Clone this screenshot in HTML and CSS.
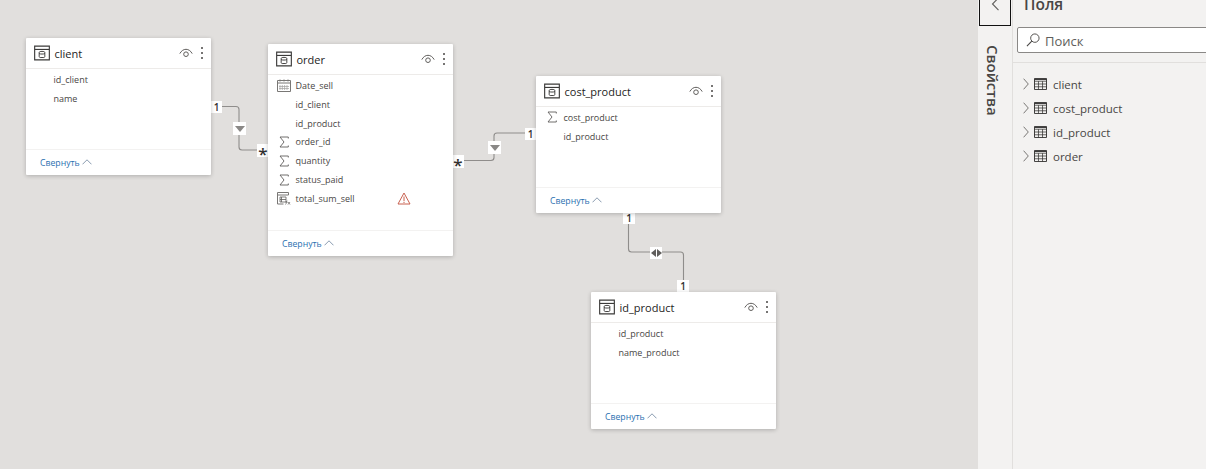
FILE: index.html
```html
<!DOCTYPE html>
<html lang="ru">
<head>
<meta charset="utf-8">
<title>Модель</title>
<link rel="stylesheet" href="styles.css">
</head>
<body>
<svg width="0" height="0" class="defs">
  <defs>
    <symbol id="i-table" viewBox="0 0 17 16">
      <path d="M.7.7h15.6v14.6H.7z" fill="none" stroke="#3b3a39" stroke-width="1.2"/>
      <path d="M1 4.2h15" stroke="#3b3a39" stroke-width="1.2"/>
      <path d="M5.5 7.4c0-.8 1.2-1.1 3-1.1s3 .3 3 1.1v4.400c0 .6-.6 1-1.100 1H6.600c-.5 0-1.100-.4-1.100-1zM5.500 8.600c1 .7 5 .7 6 0" fill="none" stroke="#3b3a39"/>
    </symbol>
    <symbol id="i-eye" viewBox="0 0 14 10">
      <path d="M.8 5.600C2.400 2.700 4.600 1.300 7 1.300s4.600 1.400 6.200 4.300" fill="none" stroke="#605e5c"/>
      <circle cx="7" cy="6.200" r="2.300" fill="none" stroke="#605e5c"/>
    </symbol>
    <symbol id="i-dots" viewBox="0 0 4 14">
      <circle cx="2" cy="2" r="1" fill="#484644"/><circle cx="2" cy="7" r="1" fill="#484644"/><circle cx="2" cy="12" r="1" fill="#484644"/>
    </symbol>
    <symbol id="i-sum" viewBox="0 0 10 12">
      <path d="M9.300 2.500V1H1l4 5-4 5h8.300V9.500" fill="none" stroke="#605e5c" stroke-width=".9"/>
    </symbol>
    <symbol id="i-cal" viewBox="0 0 14 13">
      <path d="M.5 1.500h13v11H.5z" fill="#fff" stroke="#797775"/>
      <path d="M.5 4h13M3 .5v2M7 .5v2M11 .5v2" stroke="#797775"/>
      <path d="M3 6v5M5.300 6v5M7.600 6v5M10 6v5M2 7.500h10M2 9.500h10" stroke="#a19f9d" stroke-width=".7"/>
    </symbol>
    <symbol id="i-calc" viewBox="0 0 14 13">
      <path d="M.5.500h11v2.500H.5zM.5 3v9h6" fill="none" stroke="#797775"/>
      <path d="M3 5h6v5H3zM4.500 5v5M3 7.500h6" fill="none" stroke="#605e5c" stroke-width=".8"/>
      <path d="M8.500 12.500c1 0 .6-4 1.800-4M8.700 10.200h2M11 10l2 2.500M13 10l-2 2.500" fill="none" stroke="#605e5c" stroke-width=".7"/>
    </symbol>
    <symbol id="i-up" viewBox="0 0 10 6">
      <path d="M.5 5.300 5 .8l4.500 4.500" fill="none" stroke="#8a9bb0"/>
    </symbol>
    <symbol id="i-grid" viewBox="0 0 14 13">
      <path d="M.5.500h13v12H.5z" fill="none" stroke="#323130"/>
      <path d="M.5 3.500h13M.5 6.500h13M.5 9.500h13M4.800 3.500v9M9.200 3.500v9" stroke="#323130" stroke-width=".8"/>
      <path d="M.5 1.500h13" stroke="#323130" stroke-width="1.200"/>
    </symbol>
    <symbol id="i-right" viewBox="0 0 6 12">
      <path d="M.6.700 5.300 6 .6 11.300" fill="none" stroke="#797775"/>
    </symbol>
  </defs>
</svg>

<main class="app">
  <section class="canvas">
    <svg class="wires" width="978" height="469" viewBox="0 0 978 469">
      <path d="M222 106.500h14q3 0 3 3V147q0 3 3 3h16"/>
      <path d="M463 160.500h28q3 0 3-3V136q0-3 3-3h29"/>
      <path d="M628.500 224v25q0 3 3 3h49q3 0 3 3v26"/>
    </svg>

    <span class="tag tag-a">1</span>
    <span class="tag tag-star tag-b">*</span>
    <span class="tag tag-star tag-c">*</span>
    <span class="tag tag-d">1</span>
    <span class="tag tag-e">1</span>
    <span class="tag tag-f">1</span>

    <span class="dir dir-a"><i class="tri"></i></span>
    <span class="dir dir-b"><i class="tri"></i></span>
    <span class="dir dir-c"><i class="tri-l"></i><i class="tri-r"></i></span>

    <article class="card card-client">
      <header class="card-head">
        <svg class="ic-table"><use href="#i-table"/></svg>
        <h2 class="card-title">client</h2>
        <svg class="ic-eye"><use href="#i-eye"/></svg>
        <svg class="ic-dots"><use href="#i-dots"/></svg>
      </header>
      <ul class="fields">
        <li class="field"><span class="field-ic"></span>id_client</li>
        <li class="field"><span class="field-ic"></span>name</li>
      </ul>
      <footer class="card-foot"><span class="collapse">Свернуть</span><svg class="ic-up"><use href="#i-up"/></svg></footer>
    </article>

    <article class="card card-order">
      <header class="card-head">
        <svg class="ic-table"><use href="#i-table"/></svg>
        <h2 class="card-title">order</h2>
        <svg class="ic-eye"><use href="#i-eye"/></svg>
        <svg class="ic-dots"><use href="#i-dots"/></svg>
      </header>
      <ul class="fields">
        <li class="field"><span class="field-ic"><svg class="ic-cal"><use href="#i-cal"/></svg></span>Date_sell</li>
        <li class="field"><span class="field-ic"></span>id_client</li>
        <li class="field"><span class="field-ic"></span>id_product</li>
        <li class="field"><span class="field-ic"><svg class="ic-sum"><use href="#i-sum"/></svg></span>order_id</li>
        <li class="field"><span class="field-ic"><svg class="ic-sum"><use href="#i-sum"/></svg></span>quantity</li>
        <li class="field"><span class="field-ic"><svg class="ic-sum"><use href="#i-sum"/></svg></span>status_paid</li>
        <li class="field"><span class="field-ic"><svg class="ic-cal"><use href="#i-calc"/></svg></span>total_sum_sell
          <svg class="ic-warn" viewBox="0 0 14 13"><path d="M7 1 13 12H1z" fill="none" stroke="#c8604f"/><path d="M7 4.500v4.500M7 9.800v1.200" stroke="#c8604f"/></svg>
        </li>
      </ul>
      <footer class="card-foot"><span class="collapse">Свернуть</span><svg class="ic-up"><use href="#i-up"/></svg></footer>
    </article>

    <article class="card card-cost">
      <header class="card-head">
        <svg class="ic-table"><use href="#i-table"/></svg>
        <h2 class="card-title">cost_product</h2>
        <svg class="ic-eye"><use href="#i-eye"/></svg>
        <svg class="ic-dots"><use href="#i-dots"/></svg>
      </header>
      <ul class="fields">
        <li class="field"><span class="field-ic"><svg class="ic-sum"><use href="#i-sum"/></svg></span>cost_product</li>
        <li class="field"><span class="field-ic"></span>id_product</li>
      </ul>
      <footer class="card-foot"><span class="collapse">Свернуть</span><svg class="ic-up"><use href="#i-up"/></svg></footer>
    </article>

    <article class="card card-id">
      <header class="card-head">
        <svg class="ic-table"><use href="#i-table"/></svg>
        <h2 class="card-title">id_product</h2>
        <svg class="ic-eye"><use href="#i-eye"/></svg>
        <svg class="ic-dots"><use href="#i-dots"/></svg>
      </header>
      <ul class="fields">
        <li class="field"><span class="field-ic"></span>id_product</li>
        <li class="field"><span class="field-ic"></span>name_product</li>
      </ul>
      <footer class="card-foot"><span class="collapse">Свернуть</span><svg class="ic-up"><use href="#i-up"/></svg></footer>
    </article>
  </section>

  <aside class="strip">
    <button class="back" type="button" aria-label="Назад">
      <svg class="ic-back" width="9" height="14" viewBox="0 0 9 14"><path d="M7.500.800 1.500 7l6 6.200" fill="none" stroke="#605e5c" stroke-width="1.100"/></svg>
    </button>
    <span class="strip-label">Свойства</span>
  </aside>

  <aside class="panel">
    <h1 class="panel-title">Поля</h1>
    <div class="search-wrap">
      <div class="search">
        <svg class="ic-search" viewBox="0 0 15 15"><circle cx="9.500" cy="5.500" r="4.500" fill="none" stroke="#484644"/><path d="M6.200 8.800 1 14" stroke="#484644" stroke-width="1.200"/></svg>
        <span class="search-text">Поиск</span>
      </div>
    </div>
    <ul class="tree">
      <li class="tree-row"><svg class="ic-right"><use href="#i-right"/></svg><svg class="ic-grid"><use href="#i-grid"/></svg>client</li>
      <li class="tree-row"><svg class="ic-right"><use href="#i-right"/></svg><svg class="ic-grid"><use href="#i-grid"/></svg>cost_product</li>
      <li class="tree-row"><svg class="ic-right"><use href="#i-right"/></svg><svg class="ic-grid"><use href="#i-grid"/></svg>id_product</li>
      <li class="tree-row"><svg class="ic-right"><use href="#i-right"/></svg><svg class="ic-grid"><use href="#i-grid"/></svg>order</li>
    </ul>
  </aside>
</main>
</body>
</html>
```

FILE: styles.css
```css
* { box-sizing: border-box; }
html, body { margin: 0; padding: 0; height: 100%; overflow: hidden; }
body { font-family: "Open Sans", "Noto Sans", sans-serif; color: #323130; background: #f3f2f1; }
.defs { position: absolute; }
ul { list-style: none; margin: 0; padding: 0; }

.app { display: flex; width: 1206px; height: 469px; }

.canvas { position: relative; flex: 0 0 978px; height: 469px; background: #e1dfdd; overflow: hidden; }
.wires { position: absolute; left: 0; top: 0; }
.wires path { fill: none; stroke: #8f8d8b; stroke-width: 1.100; }

.tag {
  position: absolute; width: 11px; height: 12px; background: #fff;
  font: 600 10px/12px "Open Sans", sans-serif; text-align: center; color: #323130;
}
.tag-star { font-size: 17px; line-height: 19px; font-weight: 600; height: 13px; width: 12px; }
.tag-a { left: 211px; top: 101px; }
.tag-b { left: 257px; top: 144px; }
.tag-c { left: 452px; top: 155px; }
.tag-d { left: 525px; top: 128px; }
.tag-e { left: 623px; top: 212px; width: 12px; }
.tag-f { left: 677px; top: 280px; width: 12px; }

.dir {
  position: absolute; width: 13px; height: 13px; background: #fff;
  display: flex; align-items: center; justify-content: center;
}
.dir-a { left: 233px; top: 122px; }
.dir-b { left: 488px; top: 141px; }
.dir-c { left: 650px; top: 247px; width: 12px; height: 12px; gap: 1px; }
.tri { width: 0; height: 0; border-left: 5px solid transparent; border-right: 5px solid transparent; border-top: 6px solid #8a8886; }
.tri-l { width: 0; height: 0; border-top: 4.500px solid transparent; border-bottom: 4.500px solid transparent; border-right: 5px solid #605e5c; }
.tri-r { width: 0; height: 0; border-top: 4.500px solid transparent; border-bottom: 4.500px solid transparent; border-left: 5px solid #605e5c; }

.card {
  position: absolute; width: 185px; background: #fff; border-radius: 1px;
  box-shadow: 0 1px 4px rgba(0, 0, 0, .22);
  display: flex; flex-direction: column;
}
.card-client { left: 26px; top: 38px; height: 137px; }
.card-order { left: 268px; top: 44px; width: 184.500px; height: 212px; }
.card-cost { left: 536px; top: 76px; height: 137px; }
.card-id { left: 591px; top: 292px; height: 137px; }

.card-head {
  flex: 0 0 31px; display: flex; align-items: center; padding: 0 7px 0 8px;
  border-bottom: 1px solid #edebe9;
}
.ic-table { width: 16px; height: 16px; margin-right: 4.500px; flex: none; }
.card-title { margin: 0; flex: 1; font-size: 11px; font-weight: 400; color: #252423; }
.ic-eye { width: 14px; height: 10px; margin-right: 7px; flex: none; }
.ic-dots { width: 4px; height: 14px; flex: none; }

.fields { flex: 1; padding-top: .8px; }
.field {
  display: flex; align-items: center; height: 18.900px;
  font-size: 9px; color: #484644; padding-left: 8.500px; position: relative;
}
.field-ic { flex: 0 0 19px; display: flex; align-items: center; }
.ic-sum { width: 10px; height: 12px; margin-left: 2px; }
.ic-cal { width: 14px; height: 13px; }
.ic-warn { position: absolute; left: 129px; top: 3px; width: 14px; height: 13px; }

.card-foot {
  flex: 0 0 26px; display: flex; align-items: center; padding-left: 14px; gap: 2px;
  border-top: 1px solid #f3f2f1;
}
.collapse { font-size: 8.700px; color: #2a6fb0; }
.ic-up { width: 10px; height: 6px; margin-bottom: 2px; }

.strip {
  flex: 0 0 35px; background: #f3f2f1; border-right: 1px solid #e1dfdd;
  display: flex; flex-direction: column; align-items: flex-start;
  border-left: 1px solid #f3f2f1;
}
.back {
  flex: none; width: 32px; height: 26px; padding: 0;
  background: #f3f2f1; border: 1px solid #111; border-top: 0;
  display: flex; align-items: flex-start; justify-content: center;
}
.ic-back { margin-top: -3px; flex: none; }
.strip-label {
  margin: 19px 0 0 5px; writing-mode: vertical-rl; font-size: 15px; font-weight: 600; color: #484644;
  line-height: 18px;
}

.panel { flex: 1; min-width: 0; background: #f3f2f1; display: flex; flex-direction: column; overflow: hidden; }
.panel-title { margin: -7px 0 0 11px; height: 34px; font-size: 15.500px; line-height: 22px; font-weight: 600; color: #484644; }
.search-wrap { padding: 0 0 9px 4px; border-bottom: 1px solid #e1dfdd; }
.search {
  display: flex; align-items: center; height: 26px; margin-right: -6px; padding-left: 8px; gap: 5px;
  background: #fff; border: 1px solid #8a8886; border-radius: 2px;
  font-size: 13px; color: #605e5c;
}
.ic-search { width: 14px; height: 14px; }
.search-text { padding-top: 2px; }
.tree { padding: 9px 0 0 9px; }
.tree-row { display: flex; align-items: center; height: 24px; font-size: 11.500px; color: #484644; }
.ic-right { width: 6px; height: 12px; margin-left: 1px; margin-right: 5px; }
.ic-grid { width: 13px; height: 12px; margin-right: 6px; }
```
